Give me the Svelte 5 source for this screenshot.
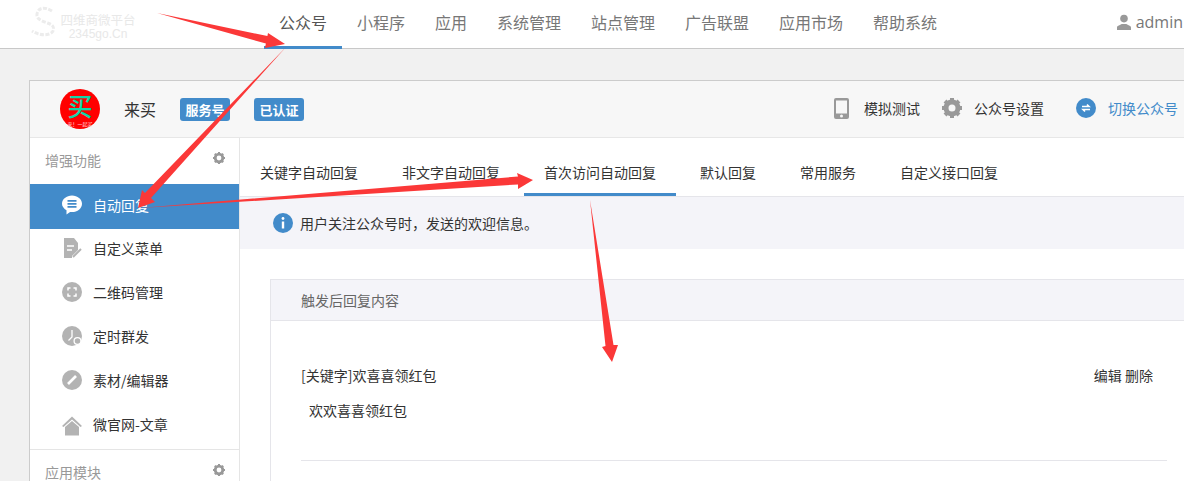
<script>
  const nav = ['公众号', '小程序', '应用', '系统管理', '站点管理', '广告联盟', '应用市场', '帮助系统'];
  const tabs = ['关键字自动回复', '非文字自动回复', '首次访问自动回复', '默认回复', '常用服务', '自定义接口回复'];
  const arrows = [
    '157,13 267.400,36 268,33 285,44 265,48 265.900,43.500',
    '286,47 151,198 155,202 138,208 142,190 145,193',
    '140,208 518,176.500 517,173 533,180 518,189 518,184.500',
    '590,200 613.500,345 618,345 612,362 602,347 605.500,346'
  ];
</script>

<div class="page">
  <header class="top">
    <div class="logo">
      <svg class="logo-mark" viewBox="0 0 32 34" width="32" height="34" aria-hidden="true">
        <path d="M22 6C14 1 8 3 7 9s8 8 13 10 5 8-1 10-12 0-17-3" fill="none" stroke="#ececec" stroke-width="3" stroke-dasharray="4 1.500"/>
      </svg>
      <div class="logo-text">
        <span class="logo-a">四维商微平台</span>
        <span class="logo-b">2345go.Cn</span>
      </div>
    </div>
    <nav class="nav">
      {#each nav as item, i}
        <span class="nav-item" class:on={i === 0}>{item}</span>
      {/each}
    </nav>
    <div class="user">
      <svg viewBox="0 0 14 16" width="14" height="16" aria-hidden="true">
        <circle cx="7" cy="4.600" r="3.800" fill="#999"/>
        <path d="M0 16v-2.600c0-1.600 3-2.200 4.600-3.400h4.800c1.600 1.200 4.600 1.800 4.600 3.400V16z" fill="#999"/>
      </svg>
      <span>admin</span>
    </div>
  </header>

  <section class="shell">
    <div class="head">
      <div class="avatar">
        <span class="av-main">买</span>
        <span class="av-sub">来！一起买</span>
      </div>
      <span class="name">来买</span>
      <span class="tag">服务号</span>
      <span class="tag">已认证</span>
      <div class="actions">
        <span class="act a1">
          <svg viewBox="0 0 15 21" width="15" height="21" aria-hidden="true">
            <path fill-rule="evenodd" d="M2 0h11a2 2 0 0 1 2 2v17a2 2 0 0 1-2 2H2a2 2 0 0 1-2-2V2a2 2 0 0 1 2-2zM2 2.500v13h11v-13zM7.500 16.500a1.500 1.500 0 1 0 0 3 1.500 1.500 0 0 0 0-3z" fill="#999"/>
          </svg>
          模拟测试
        </span>
        <span class="act a2">
          <svg viewBox="0 0 20 20" width="20" height="20" aria-hidden="true">
            <circle cx="10" cy="10" r="6" fill="none" stroke="#999" stroke-width="5"/>
            <path d="M10 0v3M10 17v3M0 10h3M17 10h3M3 3l2 2M15 15l2 2M3 17l2-2M15 5l2-2" stroke="#999" stroke-width="4"/>
          </svg>
          公众号设置
        </span>
        <span class="act a3">
          <svg viewBox="0 0 20 20" width="20" height="20" aria-hidden="true">
            <circle cx="10" cy="10" r="10" fill="#428bca"/>
            <path d="M6 8.500h7l-2-2M14 11.500H7l2 2" fill="none" stroke="#fff" stroke-width="1.600"/>
          </svg>
          切换公众号
        </span>
      </div>
    </div>

    <div class="body">
      <aside class="side">
        <div class="side-title">
          <span>增强功能</span>
          <svg class="cog" viewBox="0 0 12 12" width="12" height="12" aria-hidden="true">
            <circle cx="6" cy="6" r="3.800" fill="none" stroke="#999" stroke-width="2.800"/>
            <path d="M6 0v2M6 10v2M0 6h2M10 6h2M1.800 1.800l1.200 1.200M9 9l1.200 1.200M1.800 10.200L3 9M9 3l1.200-1.200" stroke="#999" stroke-width="2"/>
          </svg>
        </div>

        <div class="s-item on">
          <svg viewBox="0 0 20 20" width="20" height="20" aria-hidden="true">
            <path d="M10 .5c5.500 0 10 3.600 10 8.300s-4.500 8.300-10 8.300c-.7 0-1.300 0-1.900-.2L4.500 19.500v-4.300C1.800 13.700 0 11.400 0 8.800 0 4.100 4.500.5 10 .5z" fill="#fff"/>
            <path d="M5.500 5.800h9M5.500 8.800h9M5.500 11.800h9" stroke="#428bca" stroke-width="1.700"/>
          </svg>
          <span>自动回复</span>
        </div>
        <div class="s-item">
          <svg viewBox="0 0 20 20" width="20" height="20" aria-hidden="true">
            <path d="M2 0h10l4 5v7l-6 6v2H2z" fill="#b3b3b3"/>
            <path d="M5 8h7M5 12h5" stroke="#fff" stroke-width="1.500"/>
            <path d="M11 19l8-8" stroke="#b3b3b3" stroke-width="2"/>
          </svg>
          <span>自定义菜单</span>
        </div>
        <div class="s-item">
          <svg viewBox="0 0 20 20" width="20" height="20" aria-hidden="true">
            <circle cx="10" cy="10" r="10" fill="#b3b3b3"/>
            <path d="M6 8.500V6h2.500M11.500 6H14v2.500M14 11.500V14h-2.500M8.500 14H6v-2.500" fill="none" stroke="#fff" stroke-width="1.500"/>
          </svg>
          <span>二维码管理</span>
        </div>
        <div class="s-item">
          <svg viewBox="0 0 20 20" width="20" height="20" aria-hidden="true">
            <circle cx="10" cy="10" r="10" fill="#b3b3b3"/>
            <path d="M10 4v7l-3.500 3.500" fill="none" stroke="#fff" stroke-width="1.300"/>
            <circle cx="15.500" cy="15" r="3.400" fill="#b3b3b3" stroke="#fff" stroke-width="1.300"/>
          </svg>
          <span>定时群发</span>
        </div>
        <div class="s-item">
          <svg viewBox="0 0 20 20" width="20" height="20" aria-hidden="true">
            <circle cx="10" cy="10" r="10" fill="#b3b3b3"/>
            <path d="M6 14l8-8" stroke="#fff" stroke-width="2.600"/>
          </svg>
          <span>素材/编辑器</span>
        </div>
        <div class="s-item">
          <svg class="house" viewBox="0 0 20 20" width="20" height="20" aria-hidden="true">
            <path d="M0 10L10 .5 20 10l-1.500 1L10 3.500 1.500 11z" fill="#b3b3b3"/>
            <path d="M3 11l7-6 7 6v8.500H3z" fill="#b3b3b3"/>
          </svg>
          <span>微官网-文章</span>
        </div>

        <div class="side-title second">
          <span>应用模块</span>
          <svg class="cog" viewBox="0 0 12 12" width="12" height="12" aria-hidden="true">
            <circle cx="6" cy="6" r="3.800" fill="none" stroke="#999" stroke-width="2.800"/>
            <path d="M6 0v2M6 10v2M0 6h2M10 6h2M1.800 1.800l1.200 1.200M9 9l1.200 1.200M1.800 10.200L3 9M9 3l1.200-1.200" stroke="#999" stroke-width="2"/>
          </svg>
        </div>
      </aside>

      <main class="main">
        <div class="tabs">
          {#each tabs as t, i}
            <span class="tab" class:on={i === 2}>{t}</span>
          {/each}
        </div>
        <div class="info">
          <svg viewBox="0 0 20 20" width="20" height="20" aria-hidden="true">
            <circle cx="10" cy="10" r="10" fill="#428bca"/>
            <circle cx="10" cy="5.500" r="1.400" fill="#fff"/>
            <path d="M10 8.500v7" stroke="#fff" stroke-width="2.400"/>
          </svg>
          <span>用户关注公众号时，发送的欢迎信息。</span>
        </div>
        <div class="panel">
          <div class="panel-head">触发后回复内容</div>
          <div class="panel-body">
            <div class="row">
              <span>[关键字]欢喜喜领红包</span>
              <span class="ops">编辑 删除</span>
            </div>
            <div class="reply">欢欢喜喜领红包</div>
            <div class="rule"></div>
          </div>
        </div>
      </main>
    </div>
  </section>

  <svg class="arrows" viewBox="0 0 1184 481" width="1184" height="481" aria-hidden="true">
    {#each arrows as pts}
      <polygon points={pts} fill="#fb3838"/>
    {/each}
  </svg>
</div>

<style>
  :global(body) { margin: 0; background: #f1f1f1; }
  .page {
    position: relative;
    width: 1184px;
    height: 481px;
    overflow: hidden;
    background: #f1f1f1;
    font-family: "Noto Sans CJK SC", "Liberation Sans", sans-serif;
    font-size: 14px;
    color: #333;
  }
  .top {
    display: flex;
    height: 48px;
    background: #fff;
    border-bottom: 1px solid #c8c8c8;
  }
  .logo {
    display: flex;
    width: 264px;
    flex: none;
    padding: 5px 0 0 30px;
    box-sizing: border-box;
  }
  .logo-mark { flex: none; }
  .logo-text { display: flex; flex-direction: column; align-items: center; color: #e8e8e8; line-height: 14px; width: 76px; margin-left: -2px; }
  .logo-a { font-size: 12.500px; margin-top: 8px; white-space: nowrap; }
  .logo-b { font-size: 12px; font-family: "Liberation Sans", sans-serif; }
  .nav { display: flex; }
  .nav-item {
    padding: 0 15px;
    font-size: 16px;
    line-height: 44px;
    height: 46px;
    color: #777;
    white-space: nowrap;
    box-sizing: border-box;
  }
  .nav-item.on { color: #555; height: 49px; border-bottom: 3px solid #428bca; }
  .user {
    margin-left: auto;
    display: flex;
    align-items: center;
    gap: 5px;
    height: 44px;
    margin-right: 1px;
    color: #777;
    font: 16px "Open Sans", "Liberation Sans", sans-serif;
  }
  .shell {
    margin: 31px -40px 0 29px;
    border: 1px solid #ccc;
    background: #fff;
  }
  .head {
    display: flex;
    align-items: center;
    height: 56px;
    background: #f7f7f7;
    border-bottom: 1px solid #e7e7e7;
    padding-left: 30px;
  }
  .avatar {
    width: 40px;
    height: 40px;
    border-radius: 50%;
    background: #f00;
    flex: none;
    display: flex;
    flex-direction: column;
    align-items: center;
  }
  .av-main {
    font-size: 25px;
    line-height: 27px;
    height: 27px;
    margin-top: 3px;
    color: #12d6a8;
    font-weight: 500;
  }
  .av-sub {
    font-size: 5px;
    line-height: 7px;
    margin-top: 1px;
    color: #ffe0e0;
    white-space: nowrap;
  }
  .name { margin-left: 24px; font-size: 16px; color: #333; width: 32px; }
  .tag {
    width: 50px;
    height: 23px;
    line-height: 23px;
    text-align: center;
    background: #428bca;
    color: #fff;
    border-radius: 3px;
    font-size: 13px;
    font-weight: 700;
    margin-left: 24px;
  }
  .actions { display: flex; align-items: center; margin-left: auto; margin-bottom: 2px; width: 389px; }
  .act { display: flex; align-items: center; white-space: nowrap; color: #333; }
  .a1 { gap: 15px; }
  .a2 { gap: 12px; margin-left: 22px; }
  .a3 { gap: 12px; margin-left: 32px; color: #428bca; }
  .body { display: flex; }
  .side {
    width: 209px;
    flex: none;
    border-right: 1px solid #e5e5e5;
    background: #fff;
  }
  .side-title {
    display: flex;
    justify-content: space-between;
    padding: 0 14px 0 15px;
    height: 46px;
    line-height: 44px;
    color: #999;
  }
  .cog { margin-top: 14px; }
  .second { border-top: 1px solid #e5e5e5; height: 32px; }
  .s-item {
    display: flex;
    align-items: center;
    gap: 11px;
    height: 44px;
    padding: 0 0 7px 32px;
    box-sizing: border-box;
    color: #333;
  }
  .s-item.on { height: 45px; padding-bottom: 4px; background: #428bca; color: #fff; }
  .house { margin-top: 4px; }
  .main { flex: 1; min-width: 0; }
  .tabs { display: flex; gap: 4px; height: 58px; border-bottom: 1px solid #e5e5ea; }
  .tab {
    padding: 0 20px;
    height: 58px;
    line-height: 68px;
    box-sizing: border-box;
    color: #333;
    white-space: nowrap;
  }
  .tab.on { border-bottom: 3px solid #428bca; }
  .info {
    display: flex;
    align-items: center;
    gap: 7px;
    height: 52px;
    padding-left: 33px;
    background: #f4f4f9;
  }
  .panel {
    margin: 30px 26px 0 30px;
    border: 1px solid #e5e5ea;
    border-right: 0;
  }
  .panel-head {
    height: 40px;
    line-height: 40px;
    padding-left: 30px;
    background: #f4f4f9;
    border-bottom: 1px solid #e5e5ea;
    color: #666;
  }
  .panel-body { padding: 43px 30px 0; }
  .row { display: flex; justify-content: space-between; line-height: 22px; padding-right: 14px; }
  .reply { padding: 13px 8px 0; line-height: 22px; }
  .rule { margin-top: 39px; border-top: 1px solid #e5e5ea; height: 60px; }
  .arrows { position: absolute; left: 0; top: 0; pointer-events: none; }
</style>
